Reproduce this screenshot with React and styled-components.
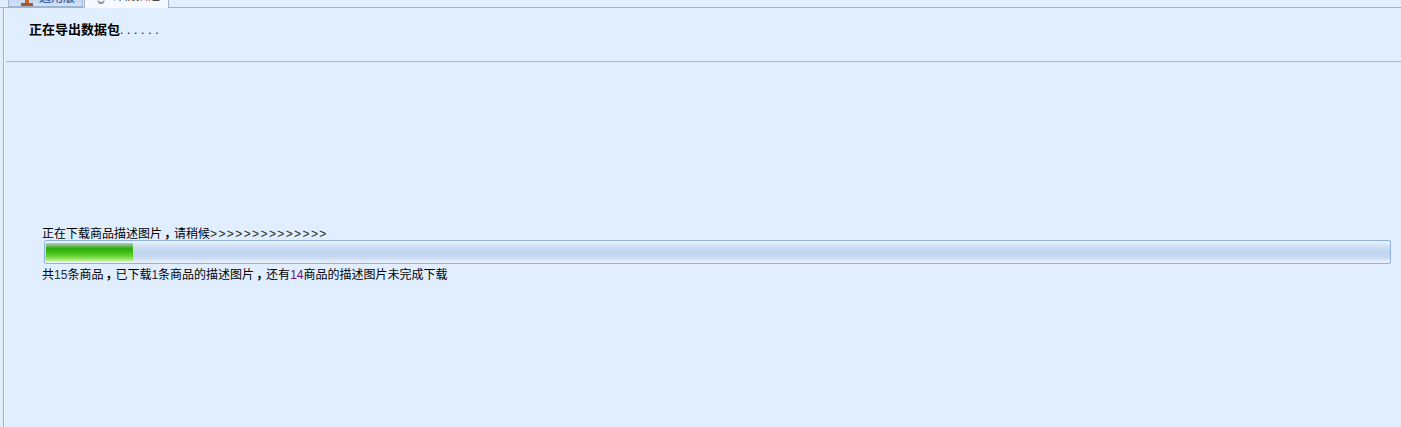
import React from "react";
import styled, { createGlobalStyle } from "styled-components";

const GlobalStyle = createGlobalStyle`
  html, body {
    margin: 0;
    padding: 0;
    height: 100%;
    overflow: hidden;
    background: #e1eeff;
  }
`;

const Page = styled.div`
  width: 1401px;
  height: 427px;
  overflow: hidden;
  background: #e1eeff;
  font-family: "Noto Sans CJK SC", "Liberation Sans", sans-serif;
  font-size: 12px;
  color: #000;
`;

const TabStrip = styled.div`
  display: flex;
  height: 7px;
  padding-left: 8px;
  gap: 1px;
  border-bottom: 1px solid #9db3d2;
  box-sizing: content-box;
  background: #e1eeff;
`;

const Tab = styled.div`
  display: flex;
  box-sizing: border-box;
  height: ${(p) => (p.$active ? "8px" : "7px")};
  width: ${(p) => (p.$active ? "85px" : "75px")};
  padding-left: ${(p) => (p.$active ? "11px" : "10px")};
  gap: ${(p) => (p.$active ? "6px" : "4px")};
  background: ${(p) =>
    p.$active ? "#f6f9ff" : "linear-gradient(to bottom, #c5d9f3, #d3e2f7)"};
  border: 1px solid #9db3d2;
  border-top: none;
  border-bottom: ${(p) => (p.$active ? "none" : "1px solid #9db3d2")};
  overflow: hidden;
`;

const TabLabel = styled.span`
  font-size: 12px;
  line-height: 16px;
  margin-top: ${(p) => (p.$active ? "-13px" : "-11px")};
  white-space: nowrap;
  color: ${(p) => (p.$active ? "#222" : "#15428b")};
`;

const Frame = styled.div`
  height: 419px;
  margin-left: 3px;
  border-left: 1px solid #9db3d2;
  padding-left: 2px;
  background: #e1eeff;
  box-shadow: inset 1px 0 0 #f0f6ff;
`;

const Header = styled.div`
  height: 53px;
  border-bottom: 1px solid #a9bcd5;
  box-sizing: content-box;
  padding-left: 23px;
`;

const Title = styled.div`
  padding-top: 13px;
  font-size: 13px;
  line-height: 16px;
  font-weight: 700;
`;

const Dots = styled.span`
  font-weight: 400;
  font-size: 12px;
  letter-spacing: 3.7px;
  font-family: "Liberation Sans", sans-serif;
`;

const ProgressSection = styled.div`
  padding: 163px 10px 0 36px;
`;

const StatusLine = styled.div`
  line-height: 16px;
  height: 16px;
  margin-bottom: -1px;
  white-space: nowrap;
`;

const Comma = styled.span`
  display: inline-block;
  width: 12px;
  box-sizing: border-box;
  padding-left: 2px;
  font-weight: 700;
`;

const Arrows = styled.span`
  font-family: "Liberation Sans", sans-serif;
  letter-spacing: 1.4px;
  color: #1d2a20;
`;

const ProgressTrack = styled.div`
  box-sizing: border-box;
  height: 24px;
  margin-left: 2px;
  padding: 1px;
  border: 1px solid #8fb2e0;
  border-radius: 2px;
  background: linear-gradient(
    to bottom,
    #eef4fc 0%,
    #d6e3f5 20%,
    #bfd4ef 50%,
    #c6d8f1 72%,
    #eaf2fc 100%
  );
`;

const ProgressFill = styled.div`
  height: 18px;
  width: 87px;
  margin-top: 1px;
  background: linear-gradient(
    to bottom,
    #b3cdae 0%,
    #7fbb76 14%,
    #2fae0c 30%,
    #3dbb12 50%,
    #6cd638 75%,
    #bdf08f 100%
  );
`;

const Summary = styled.div`
  line-height: 16px;
  margin-top: 2px;
  white-space: nowrap;
`;

const Num = styled.span`
  font-family: "Liberation Sans", sans-serif;
  color: ${(p) => p.$color || "#1b2a4a"};
`;

export default function App() {
  return (
    <Page>
      <GlobalStyle />
      <TabStrip>
        <Tab>
          <svg width="16" height="7" viewBox="0 0 16 7">
            <rect x="6" y="0" width="4" height="3" fill="#c4622c" />
            <rect x="2" y="3" width="12" height="3" fill="#a2562b" />
          </svg>
          <TabLabel>通用版</TabLabel>
        </Tab>
        <Tab $active>
          <svg width="10" height="7" viewBox="0 0 10 7">
            <path d="M1 0 L5 2 L9 0 L7 4 L3 4 Z" fill="#9a9a9a" />
          </svg>
          <TabLabel $active>详情描述</TabLabel>
        </Tab>
      </TabStrip>
      <Frame>
        <Header>
          <Title>
            正在导出数据包<Dots>......</Dots>
          </Title>
        </Header>
        <ProgressSection>
          <StatusLine>
            正在下载商品描述图片<Comma>，</Comma>请稍候<Arrows>&gt;&gt;&gt;&gt;&gt;&gt;&gt;&gt;&gt;&gt;&gt;&gt;&gt;&gt;</Arrows>
          </StatusLine>
          <ProgressTrack>
            <ProgressFill />
          </ProgressTrack>
          <Summary>
            共<Num>15</Num>条商品<Comma>，</Comma>已下载<Num>1</Num>条商品的描述图片<Comma>，</Comma>还有<Num $color="#6a0f8c">14</Num>商品的描述图片未完成下载
          </Summary>
        </ProgressSection>
      </Frame>
    </Page>
  );
}
